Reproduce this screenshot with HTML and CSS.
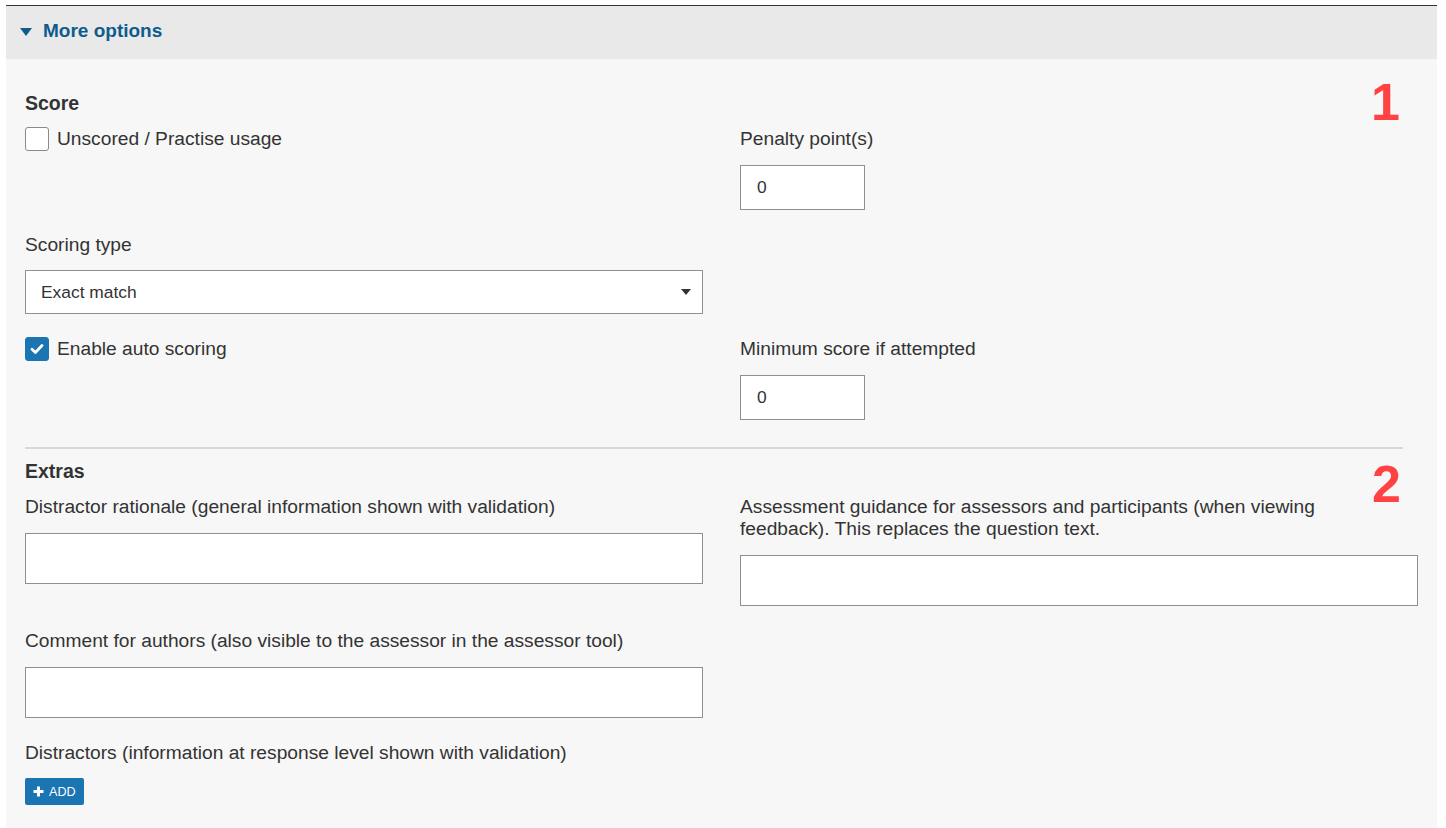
FILE: index.html
```html
<!DOCTYPE html>
<html>
<head>
<meta charset="utf-8">
<link rel="stylesheet" href="styles.css">
</head>
<body>
<div class="panel">
  <div class="panel-header">
    <span class="caret"></span>
    <span class="panel-title">More options</span>
  </div>
  <div class="panel-body">
    <section class="section">
      <span class="marker marker-1">1</span>
      <h3 class="section-title">Score</h3>
      <div class="grid">
        <div class="cell">
          <label class="check">
            <span class="box"></span>
            <span class="check-label">Unscored / Practise usage</span>
          </label>
        </div>
        <div class="cell">
          <div class="label">Penalty point(s)</div>
          <div class="input small">0</div>
        </div>
        <div class="cell select-cell">
          <div class="label">Scoring type</div>
          <div class="select">
            <span>Exact match</span>
            <span class="arrow"></span>
          </div>
        </div>
        <div class="cell select-cell"></div>
        <div class="cell last">
          <label class="check">
            <span class="box checked">
              <svg width="14" height="12" viewBox="0 0 14 12"><path d="M2 6.2 L5.4 9.4 L12 2.6" fill="none" stroke="#fff" stroke-width="2.8" stroke-linecap="round" stroke-linejoin="round"/></svg>
            </span>
            <span class="check-label">Enable auto scoring</span>
          </label>
        </div>
        <div class="cell last">
          <div class="label">Minimum score if attempted</div>
          <div class="input small">0</div>
        </div>
      </div>
    </section>
    <hr class="sep">
    <section class="section">
      <span class="marker marker-2">2</span>
      <h3 class="section-title">Extras</h3>
      <div class="grid">
        <div class="cell">
          <div class="label">Distractor rationale (general information shown with validation)</div>
          <div class="input tall"></div>
        </div>
        <div class="cell">
          <div class="label narrow">Assessment guidance for assessors and participants (when viewing feedback). This replaces the question text.</div>
          <div class="input tall"></div>
        </div>
        <div class="cell">
          <div class="label">Comment for authors (also visible to the assessor in the assessor tool)</div>
          <div class="input tall"></div>
        </div>
        <div class="cell"></div>
        <div class="cell last">
          <div class="label">Distractors (information at response level shown with validation)</div>
          <button class="btn-add">
            <svg width="11" height="11" viewBox="0 0 11 11"><path d="M5.5 0.5 V10.5 M0.5 5.5 H10.5" stroke="#fff" stroke-width="3"/></svg>
            <span>ADD</span>
          </button>
        </div>
      </div>
    </section>
  </div>
</div>
</body>
</html>
```

FILE: styles.css
```css
html, body {
  margin: 0;
  padding: 0;
  background: #ffffff;
}
body {
  font-family: "Liberation Sans", Arial, sans-serif;
  color: #333333;
  padding: 5px 9px 0 6px;
}
.panel {
  border-top: 1px solid #333333;
}
.panel-header {
  background: #e9e9e9;
  height: 53px;
  display: flex;
  align-items: center;
  padding-left: 14px;
}
.caret {
  width: 0;
  height: 0;
  border-left: 6px solid transparent;
  border-right: 6px solid transparent;
  border-top: 8px solid #0f5b8e;
  margin-top: -1px;
  margin-right: 11px;
}
.panel-title {
  color: #0f5b8e;
  font-weight: bold;
  font-size: 19px;
  margin-top: -3px;
}
.panel-body {
  background: #f7f7f7;
  padding: 33px 20px 40px 19px;
  min-height: 700px;
}
.section {
  position: relative;
}
.marker {
  position: absolute;
  color: #ff4242;
  font-weight: bold;
  font-size: 52px;
  line-height: 1;
}
.marker-1 {
  right: 17px;
  top: -16px;
}
.marker-2 {
  right: 16px;
  top: -2px;
}
.section-title {
  margin: 0 0 14px 0;
  font-size: 19.5px;
  line-height: 22px;
  font-weight: bold;
}
.grid {
  display: grid;
  grid-template-columns: 678px 678px;
  column-gap: 37px;
}
.cell {
  margin-bottom: 24px;
}
.cell.last {
  margin-bottom: 0;
}
.label {
  font-size: 19.2px;
  line-height: 22px;
  margin-bottom: 15px;
}
.select-cell .label {
  margin-bottom: 14px;
}
.label.narrow {
  max-width: 600px;
}
.check {
  display: flex;
  align-items: center;
  gap: 8px;
  margin-top: -1px;
}
.box {
  box-sizing: border-box;
  width: 24px;
  height: 24px;
  border: 1px solid #8a8a8a;
  border-radius: 3px;
  background: #ffffff;
  display: flex;
  align-items: center;
  justify-content: center;
}
.box.checked {
  background: #1a75b2;
  border-color: #1a75b2;
}
.check-label {
  font-size: 19.2px;
  line-height: 22px;
}
.input {
  box-sizing: border-box;
  background: #ffffff;
  border: 1px solid #8f8f8f;
  font-size: 17.4px;
  display: flex;
  align-items: center;
  padding-left: 16px;
}
.input.small {
  width: 125px;
  height: 45px;
}
.input.tall {
  width: 678px;
  height: 51px;
}
.select {
  box-sizing: border-box;
  width: 678px;
  height: 44px;
  background: #ffffff;
  border: 1px solid #8f8f8f;
  font-size: 17.4px;
  display: flex;
  align-items: center;
  justify-content: space-between;
  padding: 0 11px 0 15px;
}
.arrow {
  width: 0;
  height: 0;
  border-left: 5px solid transparent;
  border-right: 5px solid transparent;
  border-top: 6px solid #333333;
}
.sep {
  border: 0;
  border-top: 2px solid #d8d8d8;
  margin: 27px 14px 11px 0;
}
.btn-add {
  display: inline-flex;
  align-items: center;
  gap: 5px;
  height: 27px;
  padding: 0 8px 0 8px;
  background: #1a75b2;
  border: 0;
  border-radius: 2px;
  color: #ffffff;
  font-family: "Liberation Sans", Arial, sans-serif;
  font-size: 12.6px;
  margin-top: -1px;
}
```
